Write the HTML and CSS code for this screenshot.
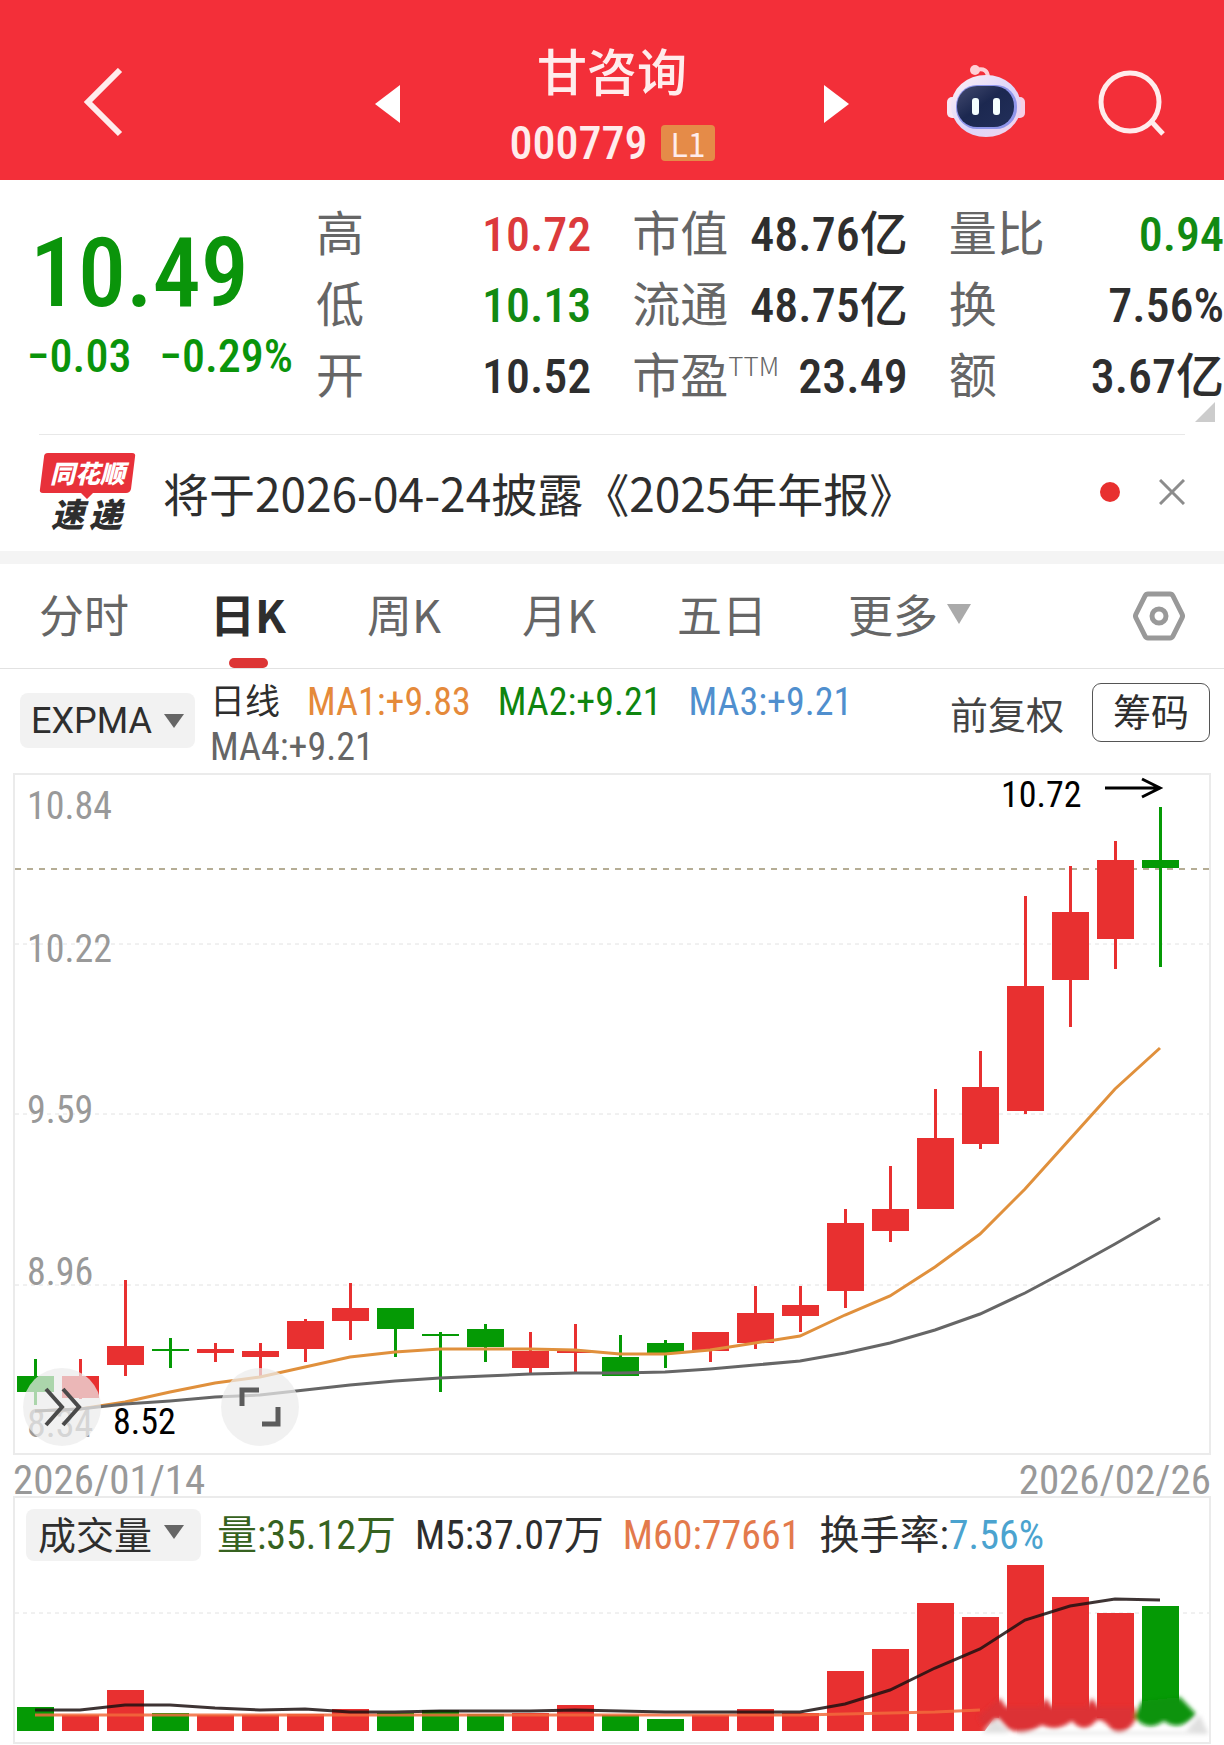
FILE: index.html
```html
<!DOCTYPE html>
<html lang="zh-CN">
<head>
<meta charset="utf-8">
<meta name="viewport" content="width=device-width, initial-scale=1">
<title>甘咨询 000779</title>
<link rel="stylesheet" href="styles.css">
</head>
<body>
<header class="topbar">
  <button class="icon-btn topbar-back" aria-label="返回">
    <svg width="42" height="72" viewBox="0 0 42 72"><path d="M38 2 6 34 38 66" fill="none" stroke="#ffecec" stroke-width="6"/></svg>
  </button>
  <div class="topbar-stock">
    <button class="icon-btn" aria-label="上一只">
      <svg width="26" height="40" viewBox="0 0 26 40"><path d="M26 1V39L1 20Z" fill="#fff"/></svg>
    </button>
    <div class="stock-id">
      <h1 class="stock-name">甘咨询</h1>
      <p class="stock-code">000779 <span class="level">L1</span></p>
    </div>
    <button class="icon-btn" aria-label="下一只">
      <svg width="26" height="40" viewBox="0 0 26 40"><path d="M0 1V39L25 20Z" fill="#fff"/></svg>
    </button>
  </div>
  <div class="topbar-actions">
    <button class="icon-btn" aria-label="智能助手">
      <svg width="80" height="80" viewBox="0 0 80 80">
        <defs>
          <linearGradient id="shell" x1="0" y1="0" x2="1" y2="1"><stop offset="0" stop-color="#fff1f4"/><stop offset=".55" stop-color="#dcd5fa"/><stop offset="1" stop-color="#f3d3ea"/></linearGradient>
          <linearGradient id="visor" x1="0" y1="0" x2="1" y2="1"><stop offset="0" stop-color="#444b70"/><stop offset=".45" stop-color="#1c2850"/><stop offset="1" stop-color="#222f5a"/></linearGradient>
        </defs>
        <path d="M29 6Q41 3 41 14" fill="none" stroke="#ffd0d6" stroke-width="4"/>
        <circle cx="28" cy="6" r="5" fill="#ffd0d6"/>
        <rect x="0" y="33" width="12" height="21" rx="5" fill="#f8e6f4"/>
        <rect x="66" y="33" width="12" height="21" rx="5" fill="#f5cfe6"/>
        <ellipse cx="39" cy="42" rx="35" ry="31" fill="url(#shell)"/>
        <rect x="9" y="21" width="61" height="44" rx="21" fill="#8f95ea"/>
        <rect x="10" y="22" width="57" height="41" rx="20" fill="url(#visor)"/>
        <rect x="25" y="34" width="7" height="17" rx="3" fill="#f4feff"/>
        <rect x="46" y="34" width="7" height="17" rx="3" fill="#f4feff"/>
      </svg>
    </button>
    <button class="icon-btn" aria-label="搜索">
      <svg width="68" height="68" viewBox="0 0 68 68"><circle cx="32" cy="32" r="29" fill="none" stroke="#ffecec" stroke-width="5"/><path d="M52 50 65 64" stroke="#ffecec" stroke-width="5"/></svg>
    </button>
  </div>
</header>

<main>
  <section class="quote">
    <div class="quote-price">
      <p class="price">10.49</p>
      <p class="change"><span>−0.03</span><span>−0.29%</span></p>
    </div>
    <dl class="stats">
      <div><dt>高</dt><dd class="up">10.72</dd></div>
      <div><dt>低</dt><dd class="down">10.13</dd></div>
      <div><dt>开</dt><dd>10.52</dd></div>
    </dl>
    <dl class="stats">
      <div><dt>市值</dt><dd>48.76亿</dd></div>
      <div><dt>流通</dt><dd>48.75亿</dd></div>
      <div><dt>市盈<sup>TTM</sup></dt><dd>23.49</dd></div>
    </dl>
    <dl class="stats">
      <div><dt>量比</dt><dd class="down">0.94</dd></div>
      <div><dt>换</dt><dd>7.56%</dd></div>
      <div><dt>额</dt><dd>3.67亿</dd></div>
    </dl>
    <span class="quote-corner"></span>
  </section>

  <section class="news">
    <svg class="news-logo" width="98" height="96" viewBox="0 -8 98 96">
      <path d="M9 1H93Q97 1 96 5L92 37Q91 41 87 41H54L48 47 42 41H4Q0 41 1 37L5 5Q5 1 9 1Z" fill="#e8313a"/>
      <text x="11" y="31" class="logo-top">同花顺</text>
      <text x="12" y="75" class="logo-bottom">速</text>
      <text x="50" y="75" class="logo-bottom">递</text>
    </svg>
    <a class="news-text" href="#report">将于2026-04-24披露《2025年年报》</a>
    <span class="news-dot"></span>
    <button class="icon-btn" aria-label="关闭">
      <svg width="26" height="26" viewBox="0 0 26 26"><path d="M1 1 25 25M25 1 1 25" stroke="#8c8c8c" stroke-width="3"/></svg>
    </button>
  </section>

  <nav class="tabs">
    <a class="tab" href="#time">分时</a>
    <a class="tab tab-active" href="#day" aria-current="page">日K</a>
    <a class="tab" href="#week">周K</a>
    <a class="tab" href="#month">月K</a>
    <a class="tab" href="#five">五日</a>
    <a class="tab" href="#more">更多<svg class="tab-caret" width="24" height="22" viewBox="0 0 24 22"><path d="M0 1H24L12 21Z" fill="#aaa"/></svg></a>
    <button class="icon-btn tabs-settings" aria-label="设置">
      <svg width="52" height="52" viewBox="0 0 52 52"><g fill="none" stroke="#999" stroke-width="5" stroke-linejoin="round"><path d="M15 4H37Q39 4 40 6L49 24Q50 26 49 28L40 46Q39 48 37 48H15Q13 48 12 46L3 28Q2 26 3 24L12 6Q13 4 15 4Z"/><circle cx="26" cy="26" r="7"/></g></svg>
    </button>
  </nav>

  <section class="indicator">
    <button class="picker picker-latin">EXPMA<svg width="20" height="15" viewBox="0 0 20 15"><path d="M0 0H20L10 14Z" fill="#666"/></svg></button>
    <p class="legend">
      <span class="legend-name">日线</span>
      <span class="c-orange">MA1:+9.83</span>
      <span class="c-green">MA2:+9.21</span>
      <span class="c-blue">MA3:+9.21</span>
      <span class="c-gray">MA4:+9.21</span>
    </p>
    <a class="adjust" href="#adjust">前复权</a>
    <button class="chips">筹码</button>
  </section>

  <section class="panel price-panel">
    <svg id="price-chart" class="plot" viewBox="15 774 1194 678" role="img" aria-label="日K线"></svg>
    <button class="float-btn float-left" aria-label="展开">
      <svg width="40" height="40" viewBox="0 0 40 40"><path d="M4 2 20 20 4 38M21 2 37 20 21 38" fill="none" stroke="#4a4a4a" stroke-width="4"/></svg>
    </button>
    <button class="float-btn float-right" aria-label="全屏">
      <svg width="44" height="44" viewBox="0 0 44 44"><path d="M4 21V5H21M24 39H40V22" fill="none" stroke="#5c5c5c" stroke-width="5"/></svg>
    </button>
  </section>
  <p class="dates"><time>2026/01/14</time><time>2026/02/26</time></p>

  <section class="panel">
    <div class="volume-head">
      <button class="picker">成交量<svg width="20" height="15" viewBox="0 0 20 15"><path d="M0 0H20L10 14Z" fill="#666"/></svg></button>
      <p class="volume-legend">
        <span class="c-olive">量:35.12万</span>
        <span>M5:37.07万</span>
        <span class="c-coral">M60:77661</span>
        <span>换手率:<span class="c-sky">7.56%</span></span>
      </p>
    </div>
    <svg id="volume-chart" class="plot" viewBox="15 1561 1194 180" role="img" aria-label="成交量"></svg>
  </section>
</main>
<script src="chart.js"></script>
</body>
</html>
```
FILE: styles.css
```css
* { box-sizing: border-box; }

body, h1, p, dl, dd { margin: 0; }

body {
  background: #fff;
  color: #2e2e2e;
  font-family: "Roboto Condensed", "Noto Sans CJK SC", sans-serif;
}

button {
  border: 0;
  padding: 0;
  background: none;
  color: inherit;
  font: inherit;
}

a { color: inherit; text-decoration: none; }
svg { display: block; }
.icon-btn { flex: none; }

/* Top bar */
.topbar {
  display: grid;
  grid-template-columns: 1fr auto 1fr;
  align-items: center;
  padding: 42px 58px 14px 82px;
  background: #f32f39;
  color: #ffecec;
}
.topbar-back { justify-self: start; }
.topbar-stock { display: flex; align-items: center; gap: 110px; margin-left: -24px; }
.stock-id { width: 204px; text-align: center; }
.stock-name { font-size: 50px; font-weight: 500; line-height: 64px; }
.stock-code {
  display: flex;
  align-items: center;
  justify-content: center;
  gap: 14px;
  padding-top: 14px;
  font-size: 46px;
  font-weight: 500;
  line-height: 46px;
}
.level {
  padding: 0 9px;
  border-radius: 4px;
  background: #e58b48;
  font-size: 32px;
  font-family: "Noto Sans CJK SC", sans-serif;
  font-weight: 400;
  line-height: 36px;
}
.topbar-actions { display: flex; align-items: center; justify-content: flex-end; gap: 71px; }

/* Quote */
.quote {
  position: relative;
  display: grid;
  grid-template-columns: 275px 1fr 1fr 1fr;
  column-gap: 41px;
  padding: 19px 0 22px;
}
.quote-price { color: #0a940a; font-weight: 500; white-space: nowrap; }
.price { padding: 18px 0 0 30px; font-size: 96px; line-height: 112px; }
.change { display: flex; gap: 28px; padding-left: 27px; font-size: 46px; line-height: 54px; }
.stats { font-size: 48px; line-height: 71px; white-space: nowrap; }
.stats div { display: flex; justify-content: space-between; }
.stats dt { color: #666; }
.stats dd { font-weight: 500; }
.stats sup {
  font-family: "Noto Sans CJK SC", sans-serif;
  font-size: 26px;
  font-weight: 300;
  line-height: 26px;
  vertical-align: 17px;
}
.up { color: #dc3a3c; }
.down { color: #128a12; }
.quote-corner {
  position: absolute;
  right: 9px;
  bottom: 12px;
  border-bottom: 20px solid #ccc;
  border-left: 20px solid transparent;
}

/* News */
.news {
  display: flex;
  align-items: center;
  margin: 0 39px;
  padding: 9px 0 11px;
  border-top: 1px solid #e8e8e8;
}
.news-logo { flex: none; }
.logo-top, .logo-bottom { font-family: "Noto Sans CJK SC", sans-serif; font-weight: 900; font-style: italic; }
.logo-top { font-size: 25px; fill: #fff; }
.logo-bottom { font-size: 33px; fill: #2e2e2e; }
.news-text {
  flex: 1;
  padding-left: 26px;
  font-family: "Noto Sans CJK SC", sans-serif;
  font-size: 46px;
  line-height: 64px;
  white-space: nowrap;
}
.news-dot { width: 20px; height: 20px; margin-right: 39px; border-radius: 50%; background: #e8302f; }

/* Tabs */
.tabs {
  display: flex;
  align-items: center;
  gap: 81px;
  padding: 0 39px;
  border-top: 13px solid #f4f4f4;
  border-bottom: 1px solid #e2e2e2;
  font-family: "Noto Sans CJK SC", sans-serif;
  font-size: 45px;
  color: #666;
}
.tab {
  display: flex;
  align-items: center;
  position: relative;
  padding-bottom: 4px;
  line-height: 100px;
  white-space: nowrap;
}
.tab-active { color: #2e2e2e; font-weight: 700; }
.tab-active::after {
  content: "";
  position: absolute;
  bottom: 0;
  left: 50%;
  width: 39px;
  height: 10px;
  margin-left: -19px;
  border-radius: 5px;
  background: #dd3535;
}
.tab-caret { margin-left: 9px; }
.tabs-settings { margin-left: auto; }

/* Indicator row */
.indicator { display: flex; align-items: flex-start; padding: 10px 14px 3px 20px; }
.picker {
  display: flex;
  flex: none;
  align-items: center;
  gap: 12px;
  padding: 0 17px 4px 12px;
  border-radius: 8px;
  background: #f2f2f2;
  font-family: "Noto Sans CJK SC", sans-serif;
  font-size: 38px;
  line-height: 48px;
}
.picker-latin { margin-top: 14px; padding: 2px 11px 0; font-family: Roboto, sans-serif; font-size: 36px; line-height: 53px; }
.legend {
  display: flex;
  flex: 1;
  flex-wrap: wrap;
  column-gap: 27px;
  padding: 1px 0 0 15px;
  font-size: 38px;
  line-height: 45px;
}
.legend-name { font-size: 35px; }
.adjust { padding: 9px 28px 0 0; font-size: 38px; line-height: 56px; color: #444; }
.chips {
  flex: none;
  margin-top: 4px;
  padding: 2px 20px 0;
  border: 1px solid #555;
  border-radius: 9px;
  font-size: 38px;
  line-height: 55px;
}
.c-orange { color: #e58a3a; }
.c-green { color: #0f850f; }
.c-blue { color: #508fce; }
.c-gray { color: #666; }
.c-olive { color: #366220; }
.c-coral { color: #e37a4c; }
.c-sky { color: #4ba3cf; }

/* Charts */
.panel { position: relative; margin: 0 13px; border: 2px solid #ebebeb; }
.plot { width: 100%; height: auto; }
.plot text { font-size: 38px; fill: #999; }
.plot .mark { font-size: 36px; fill: #000; }
.float-btn {
  position: absolute;
  bottom: 7px;
  display: grid;
  place-items: center;
  width: 78px;
  height: 78px;
  border-radius: 50%;
  background: rgba(236, 236, 236, .72);
}
.float-left { left: 8px; }
.float-right { left: 206px; }
.dates {
  display: flex;
  justify-content: space-between;
  padding: 10px 13px 0;
  font-size: 41px;
  line-height: 31px;
  color: #999;
}
.volume-head { display: flex; align-items: center; gap: 16px; padding: 10px 11px 1px; }
.volume-legend { display: flex; gap: 19px; padding-top: 3px; font-size: 40px; line-height: 50px; white-space: nowrap; }
```
FILE: chart.js
```js
const RED = '#e83030';
const GREEN = '#059a05';
const STEP = 45;
const FIRST = 35;
const HALF = 18;

// [direction, high, body top, body bottom, low, volume top]
const days = [
  ['g', 1358, 1375, 1391, 1404, 1706],
  ['r', 1358, 1375, 1397, 1398, 1714],
  ['r', 1279, 1345, 1364, 1375, 1689],
  ['g', 1337, 1348, 1350, 1367, 1712],
  ['r', 1342, 1348, 1352, 1361, 1714],
  ['r', 1342, 1350, 1356, 1375, 1714],
  ['r', 1318, 1320, 1348, 1361, 1713],
  ['r', 1282, 1307, 1320, 1339, 1708],
  ['g', 1307, 1307, 1328, 1356, 1712],
  ['g', 1331, 1333, 1335, 1391, 1709],
  ['g', 1323, 1328, 1346, 1361, 1713],
  ['r', 1331, 1350, 1367, 1372, 1712],
  ['r', 1323, 1350, 1352, 1371, 1704],
  ['g', 1334, 1356, 1375, 1375, 1714],
  ['g', 1339, 1342, 1352, 1367, 1718],
  ['r', 1331, 1331, 1350, 1361, 1714],
  ['r', 1285, 1312, 1342, 1348, 1708],
  ['r', 1285, 1304, 1315, 1331, 1712],
  ['r', 1208, 1222, 1290, 1307, 1670],
  ['r', 1165, 1208, 1230, 1241, 1648],
  ['r', 1088, 1137, 1208, 1208, 1602],
  ['r', 1050, 1086, 1143, 1148, 1616],
  ['r', 895, 985, 1110, 1113, 1564],
  ['r', 865, 911, 979, 1026, 1596],
  ['r', 840, 859, 938, 968, 1612],
  ['g', 806, 859, 867, 966, 1605]
];

const ma1 = [1410, 1408, 1401, 1391, 1382, 1376, 1366, 1356, 1351, 1348, 1348, 1348, 1349,
  1353, 1353, 1349, 1342, 1335, 1314, 1295, 1266, 1233, 1188, 1138, 1088, 1047];
const ma4 = [1410, 1408, 1403, 1400, 1396, 1394, 1389, 1384, 1380, 1377, 1375, 1373, 1372,
  1372, 1371, 1368, 1364, 1360, 1352, 1342, 1329, 1313, 1292, 1268, 1243, 1217];
const m5 = [1709, 1709, 1704, 1704, 1707, 1709, 1708, 1711, 1711, 1710, 1710, 1710, 1709,
  1710, 1711, 1711, 1711, 1711, 1703, 1689, 1667, 1648, 1619, 1605, 1598, 1599];
const m60 = [1714, 1714, 1714, 1714, 1714, 1714, 1714, 1714, 1714, 1714, 1714, 1714, 1714,
  1714, 1714, 1714, 1714, 1714, 1713, 1712, 1711, 1709];

const x = i => FIRST + STEP * i;
const color = d => (d === 'g' ? GREEN : RED);
const line = (ys, stroke, extra = '') =>
  `<polyline points="${ys.map((y, i) => `${x(i)},${y}`).join(' ')}" fill="none" stroke="${stroke}" stroke-width="3" ${extra}/>`;
const grid = y => `<path d="M15 ${y}H1209" stroke="#e2e2e2" stroke-width="1" stroke-dasharray="4 4"/>`;

const candles = days.map(([d, hi, top, bottom, lo], i) =>
  `<rect x="${x(i) - 1}" y="${hi}" width="3" height="${lo - hi}" fill="${color(d)}"/>` +
  `<rect x="${x(i) - HALF}" y="${top}" width="${HALF * 2 + 1}" height="${bottom - top}" fill="${color(d)}"/>`).join('');

document.getElementById('price-chart').innerHTML =
  [943, 1113, 1284].map(grid).join('') +
  '<path d="M15 868H1209" stroke="#b5ad95" stroke-width="2" stroke-dasharray="6 6"/>' +
  [['10.84', 818], ['10.22', 961], ['9.59', 1122], ['8.96', 1284], ['8.34', 1436]]
    .map(([t, y]) => `<text x="27" y="${y}">${t}</text>`).join('') +
  candles +
  line(ma1, '#e0903c') +
  line(ma4, '#666') +
  '<text class="mark" x="1001" y="806">10.72</text>' +
  '<text class="mark" x="113" y="1433">8.52</text>' +
  '<path d="M1105 787H1160M1142 778 1160 787 1142 796" fill="none" stroke="#000" stroke-width="3"/>';

const bars = days.map(([d, , , , , top], i) =>
  `<rect x="${x(i) - HALF}" y="${top}" width="${HALF * 2 + 1}" height="${1730 - top}" fill="${color(d)}"/>`).join('');

// Smeared strip over the feet of the last bars
const smear =
  '<defs><filter id="soft" x="-10%" y="-40%" width="120%" height="180%"><feGaussianBlur stdDeviation="2"/></filter></defs>' +
  '<path d="M982 1734 994 1717H1200L1210 1734Z" fill="#fff"/>' +
  '<g filter="url(#soft)">' +
  '<path d="M982 1732 996 1718 1010 1732ZM1186 1730 1200 1714 1208 1732ZM1018 1731H1208V1733H1018Z" fill="#e0e0e0"/>' +
  '<path d="M978 1716 1000 1697 1006 1706 1040 1706 1046 1697 1052 1706 1086 1706 1092 1697 1098 1706H1134L1136 1718Q1126 1736 1112 1729Q1102 1716 1096 1720Q1084 1734 1072 1720Q1056 1732 1042 1724Q1024 1736 1008 1728L998 1717 984 1726Z" fill="#dc3336"/>' +
  '<path d="M1134 1716 1142 1700 1180 1696 1196 1713Q1180 1732 1164 1720Q1148 1732 1134 1716Z" fill="#0b930b"/>' +
  '</g>';

document.getElementById('volume-chart').innerHTML =
  grid(1612) + bars +
  line(m60, '#f26a3c', 'stroke-opacity=".85"') +
  line(m5, '#1c1010', 'stroke-opacity=".85"') +
  smear;
```
